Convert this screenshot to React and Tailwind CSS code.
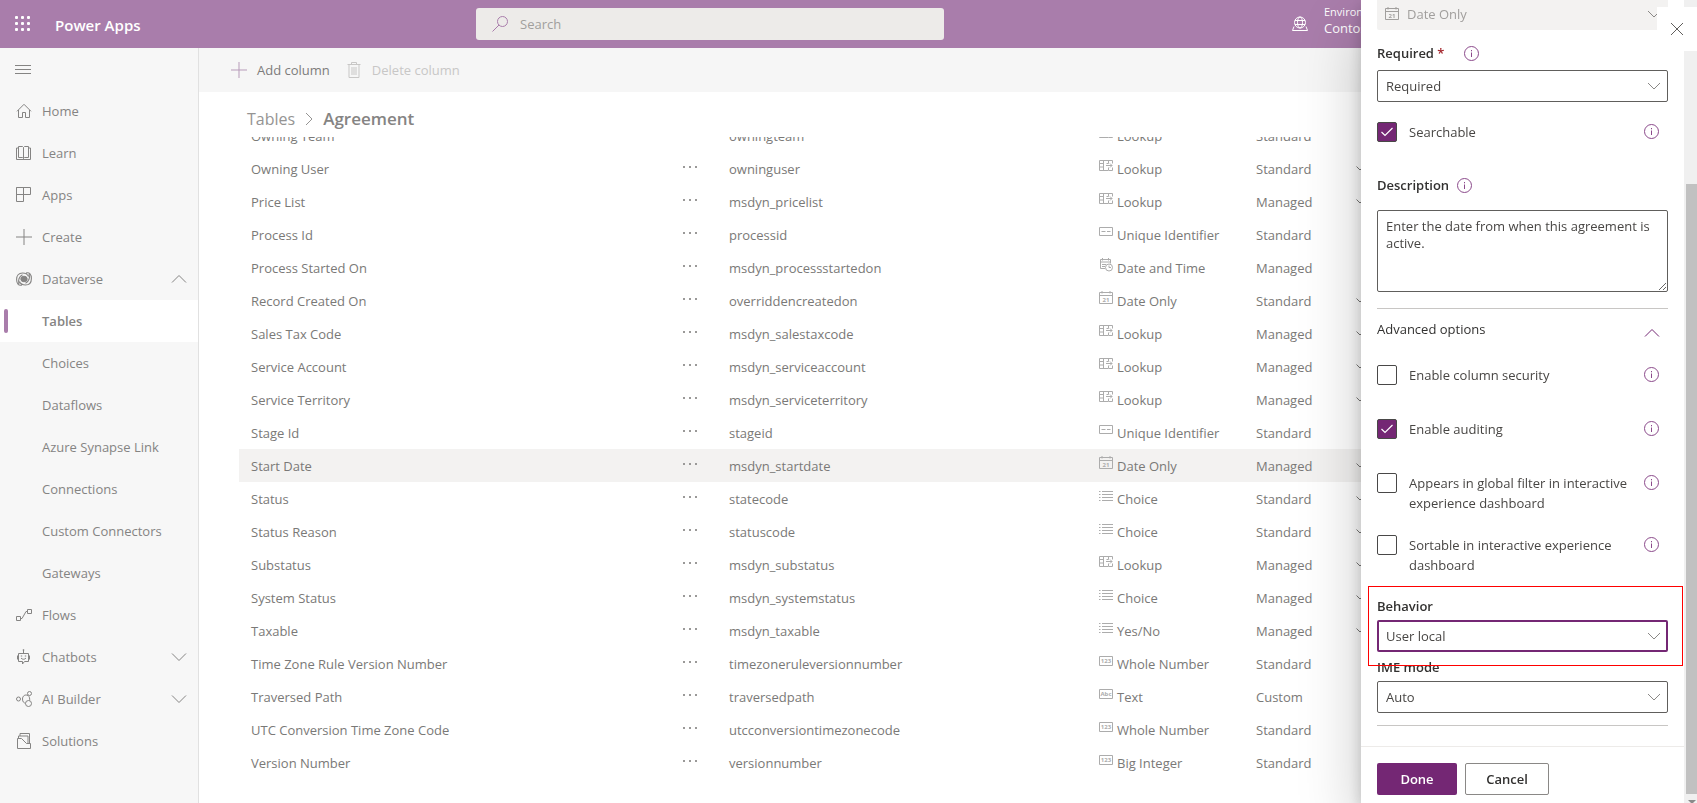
import React from 'react';

const navItems = [
  { label: 'Home', icon: 'home' },
  { label: 'Learn', icon: 'learn' },
  { label: 'Apps', icon: 'apps' },
  { label: 'Create', icon: 'create' },
  { label: 'Dataverse', icon: 'dataverse', chevron: 'up' },
  { label: 'Tables', active: true },
  { label: 'Choices' },
  { label: 'Dataflows' },
  { label: 'Azure Synapse Link' },
  { label: 'Connections' },
  { label: 'Custom Connectors' },
  { label: 'Gateways' },
  { label: 'Flows', icon: 'flows' },
  { label: 'Chatbots', icon: 'chatbots', chevron: 'down' },
  { label: 'AI Builder', icon: 'ai', chevron: 'down' },
  { label: 'Solutions', icon: 'solutions' },
];

const columns = [
  { name: 'Owning Team', schema: 'owningteam', type: 'Lookup', kind: 'Standard', custom: true },
  { name: 'Owning User', schema: 'owninguser', type: 'Lookup', kind: 'Standard', custom: true },
  { name: 'Price List', schema: 'msdyn_pricelist', type: 'Lookup', kind: 'Managed', custom: true },
  { name: 'Process Id', schema: 'processid', type: 'Unique Identifier', kind: 'Standard' },
  { name: 'Process Started On', schema: 'msdyn_processstartedon', type: 'Date and Time', kind: 'Managed' },
  { name: 'Record Created On', schema: 'overriddencreatedon', type: 'Date Only', kind: 'Standard', custom: true },
  { name: 'Sales Tax Code', schema: 'msdyn_salestaxcode', type: 'Lookup', kind: 'Managed', custom: true },
  { name: 'Service Account', schema: 'msdyn_serviceaccount', type: 'Lookup', kind: 'Managed', custom: true },
  { name: 'Service Territory', schema: 'msdyn_serviceterritory', type: 'Lookup', kind: 'Managed', custom: true },
  { name: 'Stage Id', schema: 'stageid', type: 'Unique Identifier', kind: 'Standard' },
  { name: 'Start Date', schema: 'msdyn_startdate', type: 'Date Only', kind: 'Managed', custom: true, selected: true },
  { name: 'Status', schema: 'statecode', type: 'Choice', kind: 'Standard', custom: true },
  { name: 'Status Reason', schema: 'statuscode', type: 'Choice', kind: 'Standard', custom: true },
  { name: 'Substatus', schema: 'msdyn_substatus', type: 'Lookup', kind: 'Managed', custom: true },
  { name: 'System Status', schema: 'msdyn_systemstatus', type: 'Choice', kind: 'Managed', custom: true },
  { name: 'Taxable', schema: 'msdyn_taxable', type: 'Yes/No', kind: 'Managed', custom: true },
  { name: 'Time Zone Rule Version Number', schema: 'timezoneruleversionnumber', type: 'Whole Number', kind: 'Standard' },
  { name: 'Traversed Path', schema: 'traversedpath', type: 'Text', kind: 'Custom' },
  { name: 'UTC Conversion Time Zone Code', schema: 'utcconversiontimezonecode', type: 'Whole Number', kind: 'Standard' },
  { name: 'Version Number', schema: 'versionnumber', type: 'Big Integer', kind: 'Standard' },
];

const Svg = ({ size = 16, children, className = '' }) => (
  <svg
    width={size}
    height={size}
    viewBox={`0 0 ${size} ${size}`}
    fill="none"
    stroke="currentColor"
    className={`shrink-0 ${className}`}
    aria-hidden="true"
  >
    {children}
  </svg>
);

const Chevron = ({ up, small, className }) => (
  <Svg className={className}>
    {small ? (
      <path d="M2 5l6 6 6-6" />
    ) : (
      <path d={up ? 'M1 11.5l7-7 7 7' : 'M1 4.5l7 7 7-7'} />
    )}
  </Svg>
);

const NavIcon = ({ name }) => {
  switch (name) {
    case 'home':
      return <Svg><path d="M1 8.3L8 1.3l7 7M2.5 7v7.500h4v-5h3v5h4V7" /></Svg>;
    case 'learn':
      return <Svg><path d="M2.500 3H.5v11.500h14V3h-2M7.500 2.500v11M2.500 1.500h4l1 1 1-1h4v11h-4l-1 1-1-1h-4z" /></Svg>;
    case 'apps':
      return <Svg><path d="M.5.5h14v7H.5zM7.500.5v14H.5v-14" /></Svg>;
    case 'create':
      return <Svg><path d="M8 0v16M0 8h16" /></Svg>;
    case 'dataverse':
      return (
        <Svg>
          <path d="M6 14C2.500 15 .6 12.500.6 8.500S2.600 2 6.500 2c2.500 0 5 1 6 3.500M3 13C1.800 9.500 3 5.500 6.500 3.800M10 2c3.500-1 5.400 1.500 5.400 5.500S13.400 14 9.500 14c-2.500 0-5-1-6-3.500M13 3c1.200 3.500 0 7.500-3.500 9.200" strokeWidth="1.100" />
          <ellipse cx="8" cy="8" rx="3.200" ry="2.800" fill="currentColor" />
        </Svg>
      );
    case 'flows':
      return <Svg><path d="M.5 9.500h4v4h-4zM11.500 2.500h4v4h-4zM4.500 11.500H6l4-7h1.500" /></Svg>;
    case 'chatbots':
      return (
        <Svg>
          <path d="M2.500 4.500h10v8h-4l-2 2.500v-2.500h-4zM7.500 4.500V1M1.500 6.500v4M13.500 6.500v4M5 9c1.300 1.700 3.700 1.700 5 0" />
          <path d="M5.500 6.500v1M9.500 6.500v1M6.800 1h1.400" strokeWidth="1.400" />
        </Svg>
      );
    case 'ai':
      return (
        <Svg>
          <circle cx="2.500" cy="8" r="2" />
          <circle cx="13.500" cy="2.500" r="2" />
          <circle cx="12.500" cy="12.500" r="3" />
          <path d="M12 4.500C9 3 6.500 5 6.500 8s1.500 4 3 4.200M12 4.500c1.500 1 2 3.500 1.500 5" />
        </Svg>
      );
    case 'solutions':
      return <Svg><path d="M1.500 5.500h4l5 5h4v5h-13zM2.500 5.500v-2.500h9.500v7.500M4 3V.5h9.500v10" /></Svg>;
    default:
      return <span className="w-4 shrink-0" />;
  }
};

const TypeIcon = ({ type, className = '' }) => {
  switch (type) {
    case 'Lookup':
      return <Svg size={14} className={className}><path d="M9 11.500H.5v-10h13v3M.5 4.500h4M.5 8h4M4.500 1.500v10M9.500 1.500v3h-2M7 6.500h6M11 4.500l2 2-2 2M9.500 8.500v3h4v-3" /></Svg>;
    case 'Unique Identifier':
      return <Svg size={14} className={className}><path d="M.5 2.500h13v8H.5zM2.500 6.500h4M8 6.500h3.500" /></Svg>;
    case 'Date and Time':
      return <Svg size={14} className={className}><path d="M6 10.500H1.500v-9h10v4M1.500 4h10M3.500 0v2.500M9.500 0v2.500M3 6.500h4M3 8.500h3" /><circle cx="10" cy="9.500" r="3.500" /><path d="M10 7.500v2h2" /></Svg>;
    case 'Date Only':
      return (
        <Svg size={14} className={className}>
          <path d="M.5 1.500h13v11H.5zM.5 4.500h13M3 0v2.500M11 0v2.500" />
          <text x="7" y="10.500" textAnchor="middle" fontSize="6" fontWeight="700" fill="currentColor" stroke="none">21</text>
        </Svg>
      );
    case 'Choice':
    case 'Yes/No':
      return <Svg size={14} className={className}><path d="M3 2.500h11M3 5.500h11M3 8.500h11M3 11.500h11M0 2.500h1.500M0 5.500h1.500M0 8.500h1.500M0 11.500h1.500" /></Svg>;
    default:
      return (
        <Svg size={14} className={className}>
          <path d="M.5 2.500h13v9H.5z" />
          <text x="7" y="9" textAnchor="middle" fontSize="6" fontWeight="700" fill="currentColor" stroke="none">
            {type === 'Text' ? 'Abc' : '123'}
          </text>
        </Svg>
      );
  }
};

const InfoButton = ({ label }) => (
  <button type="button" aria-label={label} className="shrink-0 text-[#8b4a8b]">
    <Svg>
      <circle cx="7.500" cy="7.500" r="7" />
      <path d="M7.500 6.500v4.500M7.500 4v1.300" />
    </Svg>
  </button>
);

const Header = () => (
  <header className="flex h-12 shrink-0 items-center bg-[#a97dab] text-white">
    <div className="flex w-[476px] items-center gap-6 pl-[15px]">
      <button type="button" aria-label="App launcher">
        <svg width="16" height="16" viewBox="0 0 16 16" fill="currentColor" aria-hidden="true">
          {[0, 6, 12].map((y) => [0, 6, 12].map((x) => (
            <rect key={`${x}-${y}`} x={x} y={y} width="3" height="3" rx="1" />
          )))}
        </svg>
      </button>
      <span className="pt-0.5 text-[15px] font-semibold">Power Apps</span>
    </div>
    <div className="flex h-8 w-[468px] items-center gap-3 rounded-[3px] bg-[#edebe9] px-4">
      <Svg className="text-[#a97dab]">
        <circle cx="10.500" cy="5.500" r="5" />
        <path d="M7 9L.5 15.500" />
      </Svg>
      <input
        type="search"
        aria-label="Search"
        placeholder="Search"
        className="min-w-0 flex-1 bg-transparent pt-0.5 outline-none placeholder:text-[#a19f9d]"
      />
    </div>
    <div className="ml-auto flex w-[405px] items-center gap-4">
      <Svg>
        <circle cx="8" cy="6.500" r="5.500" />
        <ellipse cx="8" cy="6.500" rx="2.500" ry="5.500" />
        <path d="M3 4.500h10M3 8.500h10M2 10.500L.5 14.500h15L14 10.500" />
      </Svg>
      <div className="pb-2 whitespace-nowrap">
        <div className="text-[11px] leading-4">Environment</div>
        <div className="leading-4">Contoso</div>
      </div>
    </div>
  </header>
);

const Sidebar = () => (
  <nav className="w-[199px] shrink-0 border-r border-[#e1e1e1] bg-[#f7f7f7] text-[#858483]">
    <button type="button" aria-label="Collapse navigation" className="flex h-[42px] items-center pl-[15px]">
      <Svg><path d="M0 4.500h16M0 8.500h16M0 12.500h16" /></Svg>
    </button>
    <ul>
      {navItems.map((item) => (
        <li key={item.label}>
          <a
            href="#"
            className={`relative flex h-[42px] items-center gap-[10px] pr-[11px] pl-4 ${item.active ? 'bg-white font-semibold' : ''}`}
          >
            {item.active && <span className="absolute left-1 h-6 w-1 rounded-full bg-[#a97dab]" />}
            <NavIcon name={item.icon} />
            <span className="flex-1 pt-0.5">{item.label}</span>
            {item.chevron && <Chevron up={item.chevron === 'up'} />}
          </a>
        </li>
      ))}
    </ul>
  </nav>
);

const CommandBar = () => (
  <div className="flex h-11 shrink-0 items-center gap-4 bg-[#f6f6f6] pl-8">
    <button type="button" className="flex items-center gap-[10px] text-[#7d7c7b]">
      <Svg className="text-[#b79bb9]"><path d="M8 0v16M0 8h16" /></Svg>
      <span className="pt-0.5">Add column</span>
    </button>
    <button type="button" disabled className="flex items-center gap-[10px] text-[#c8c7c6]">
      <Svg><path d="M1.500 2.500h13M5.500 2.500v-2h5v2M3 2.500v13h10v-13M6 5v8M8 5v8M10 5v8" /></Svg>
      <span className="pt-0.5">Delete column</span>
    </button>
  </div>
);

const ColumnsTable = () => (
  <div className="min-h-0 flex-1 overflow-hidden pl-10">
    <table className="-mt-[18px] w-full table-fixed text-left text-[#7a7977]">
      <colgroup>
        <col />
        <col className="w-[46px]" />
        <col className="w-[370px]" />
        <col className="w-[157px]" />
        <col className="w-[100px]" />
        <col className="w-[353px]" />
      </colgroup>
      <tbody>
        {columns.map((col) => (
          <tr key={col.schema} className={`h-[33px] ${col.selected ? 'bg-[#f3f2f1]' : ''}`}>
            <td className="pt-0.5 pl-3">{col.name}</td>
            <td className="pl-3">
              <button type="button" aria-label={`More commands for ${col.name}`} className="block pb-1 text-[#9a9998]">
                <svg width="15" height="4" viewBox="0 0 15 4" fill="currentColor" aria-hidden="true">
                  <rect x="0" y="1" width="2" height="2" />
                  <rect x="6" y="1" width="2" height="2" />
                  <rect x="12" y="1" width="2" height="2" />
                </svg>
              </button>
            </td>
            <td className="pt-0.5 pl-3">{col.schema}</td>
            <td className="pt-0.5 pl-3">
              <span className="flex items-center gap-1 whitespace-nowrap">
                <TypeIcon type={col.type} className="mb-2 text-[#acacac]" />
                {col.type}
              </span>
            </td>
            <td className="pt-0.5 pl-3">{col.kind}</td>
            <td className="pl-3">{col.custom && <Svg size={12}><path d="M.5 3.500l3.500 3.500 6-6" /></Svg>}</td>
          </tr>
        ))}
      </tbody>
    </table>
  </div>
);

const Dropdown = ({ id, value, focused, disabled, icon, label }) => (
  <div className={`relative flex items-center ${disabled ? 'text-[#a19f9d]' : 'text-[#484644]'}`}>
    {icon && <TypeIcon type={icon} className="absolute left-2 text-[#a19f9d]" />}
    <select
      id={id}
      aria-label={label}
      disabled={disabled}
      className={`h-8 w-full appearance-none rounded-xs pt-0.5 pr-8 opacity-100 outline-none ${
        disabled ? 'bg-[#f3f2f1]' : 'bg-white'
      } ${icon ? 'pl-[30px]' : ''} ${
        focused ? 'border-2 border-[#742774] pl-[7px]' : ''
      } ${!focused && !disabled ? 'border border-[#605e5c] pl-2' : ''}`}
    >
      <option>{value}</option>
    </select>
    <Chevron small className="pointer-events-none absolute right-[6px] text-[#8a8886]" />
  </div>
);

const CheckRow = ({ id, label, checked, className = '' }) => (
  <div className={`flex items-start pr-2 ${className}`}>
    <span className="relative mr-3 flex size-5 shrink-0 items-center justify-center">
      <input
        id={id}
        type="checkbox"
        defaultChecked={checked}
        className="peer size-5 appearance-none rounded-xs border border-[#494847] bg-white checked:bg-[#742774]"
      />
      <svg width="12" height="10" viewBox="0 0 12 10" fill="none" stroke="white" className="pointer-events-none absolute hidden peer-checked:block" aria-hidden="true">
        <path d="M.5 5l3.500 3.500L11.500 1" strokeWidth="1.200" />
      </svg>
    </span>
    <label htmlFor={id} className="flex-1 pr-2 leading-5 text-[#484644]">{label}</label>
    <span className="flex h-5 items-center"><InfoButton label={`About ${label}`} /></span>
  </div>
);

const EditPanel = () => (
  <aside className="fixed inset-y-0 right-0 flex w-[336px] bg-white text-[#323130] shadow-[0_26px_58px_rgba(0,0,0,0.22),0_5px_14px_rgba(0,0,0,0.18)]">
    <div className="flex min-w-0 flex-1 flex-col">
      <form className="-mt-0.5 flex-1 px-4">
        <Dropdown id="data-type" label="Data type" value="Date Only" disabled icon="Date Only" />

        <div className="flex h-10 items-center pt-2 font-semibold">
          <label htmlFor="required">Required <span className="text-[#a4262c]">*</span></label>
          <span className="ml-5 flex"><InfoButton label="About Required" /></span>
        </div>
        <Dropdown id="required" value="Required" />

        <CheckRow id="searchable" label="Searchable" checked className="mt-5" />

        <div className="mt-8 flex h-6 items-center gap-2 font-semibold">
          <label htmlFor="description">Description</label>
          <InfoButton label="About Description" />
        </div>
        <textarea
          id="description"
          defaultValue="Enter the date from when this agreement is active."
          className="mt-3 block h-[82px] w-full rounded-xs border border-[#605e5c] px-2 py-[7px] leading-[17px] text-[#484644] outline-none"
        />

        <div className="mt-4 border-t border-[#c8c6c4]">
          <button type="button" className="flex w-full items-center justify-between pt-2 pr-2 leading-5">
            Advanced options
            <Chevron up className="mt-2 text-[#742774]" />
          </button>
        </div>

        <CheckRow id="security" label="Enable column security" className="mt-6" />
        <CheckRow id="auditing" label="Enable auditing" checked className="mt-[34px]" />
        <CheckRow id="global-filter" label="Appears in global filter in interactive experience dashboard" className="mt-[34px]" />
        <CheckRow id="sortable" label="Sortable in interactive experience dashboard" className="mt-[22px]" />

        <div className="relative mt-[17px] pt-1">
          <div className="pointer-events-none absolute -top-[6px] -right-[15px] -left-[9px] z-10 h-20 border border-[#ff0000]" />
          <label htmlFor="behavior" className="block h-6 leading-5 font-semibold">Behavior</label>
          <Dropdown id="behavior" value="User local" focused />
        </div>
        <div className="pt-[5px]">
          <label htmlFor="ime" className="block h-6 leading-5 font-semibold">IME mode</label>
          <Dropdown id="ime" value="Auto" />
        </div>
        <div className="mt-3 border-t border-[#c8c6c4]" />
      </form>
      <div className="flex gap-2 border-t border-[#edebe9] px-4 pt-4 pb-2">
        <button type="button" className="h-8 w-20 rounded-xs bg-[#742774] pt-0.5 font-semibold text-white">Done</button>
        <button type="button" className="h-8 w-[84px] rounded-xs border border-[#8a8886] pt-0.5 font-semibold">Cancel</button>
      </div>
    </div>
    <div className="flex w-[13px] flex-col items-end bg-[#f0f0f0] pt-[184px]" aria-hidden="true">
      <div className="w-[11px] flex-1 bg-[#c1c1c1]" />
      <svg width="11" height="9" viewBox="0 0 11 9" fill="#8a8a8a"><path d="M2 6h8L6 10z" /></svg>
    </div>
    <button
      type="button"
      aria-label="Close"
      className="absolute top-[7px] right-0 flex h-11 w-10 items-center justify-center bg-white text-[#605e5c]"
    >
      <Svg size={14}><path d="M1 1l12 12M13 1L1 13" /></Svg>
    </button>
  </aside>
);

export default function App() {
  return (
    <div className="flex h-screen flex-col overflow-hidden bg-white font-['Open_Sans','Noto_Sans',sans-serif] text-[13px]">
      <Header />
      <div className="flex min-h-0 flex-1">
        <Sidebar />
        <main className="flex min-w-0 flex-1 flex-col">
          <CommandBar />
          <div className="flex h-[45px] shrink-0 items-center gap-2 pt-2 pl-12 text-[#959493]">
            <a href="#" className="text-base">Tables</a>
            <svg width="12" height="14" viewBox="0 0 12 14" fill="none" stroke="currentColor" aria-hidden="true">
              <path d="M3 1l6 6-6 6" />
            </svg>
            <h1 className="text-[17px] font-semibold text-[#858483]">Agreement</h1>
          </div>
          <ColumnsTable />
        </main>
      </div>
      <EditPanel />
    </div>
  );
}
